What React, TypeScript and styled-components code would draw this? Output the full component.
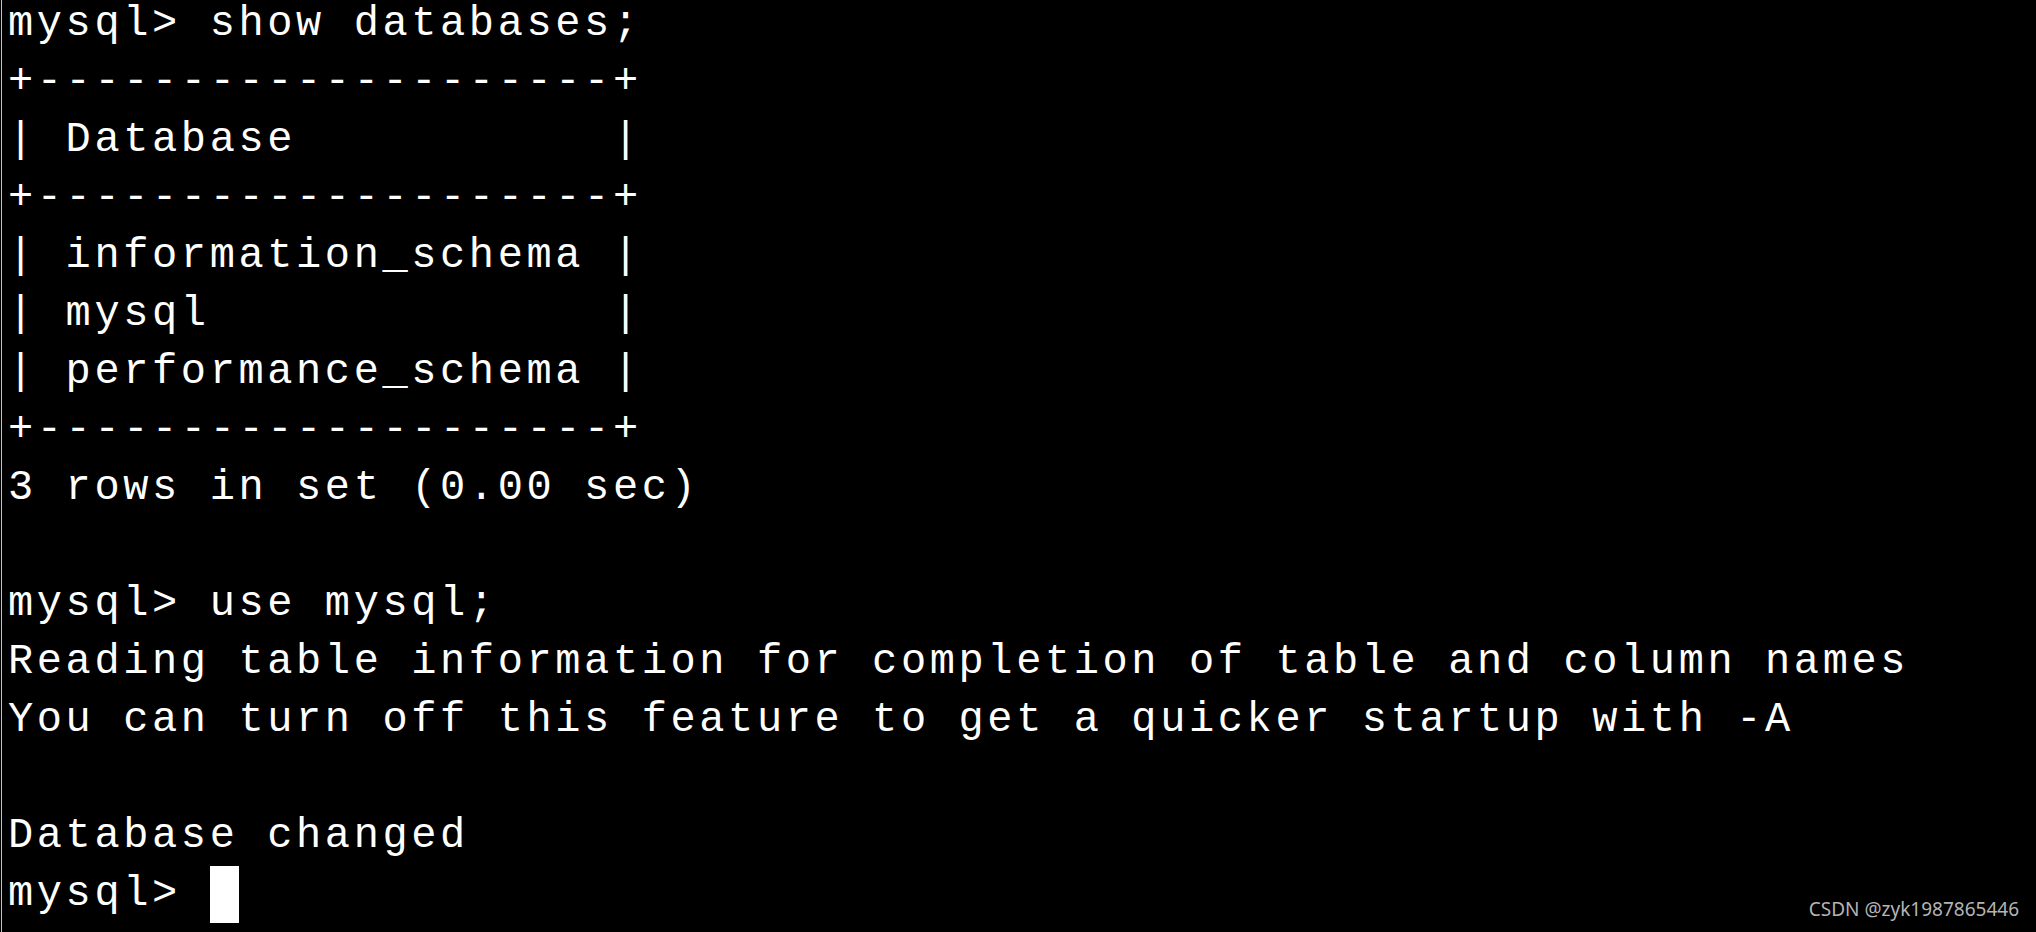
import React from "react";
import styled, { createGlobalStyle } from "styled-components";

const GlobalStyle = createGlobalStyle`
  html, body {
    margin: 0;
    padding: 0;
    background: #000000;
    overflow: hidden;
  }
  #root {
    width: 2036px;
    height: 932px;
  }
`;

const Screen = styled.div`
  position: relative;
  width: 2035px;
  height: 932px;
  box-sizing: border-box;
  margin-left: 1px;
  background: #000000;
  border-left: 1px solid #c4c4c4;
  padding-left: 6px;
  overflow: hidden;
`;

const Output = styled.div`
  display: flex;
  flex-direction: column;
  margin-top: -5px;
  font-family: "Liberation Mono", "Courier New", monospace;
  font-size: 42px;
  letter-spacing: 3.6px;
  line-height: 58px;
  color: #ffffff;
`;

const Line = styled.div`
  white-space: pre;
  height: 58px;
`;

const Cursor = styled.span`
  display: inline-block;
  width: 29px;
  height: 57px;
  background: #ffffff;
  vertical-align: -18px;
`;

const Watermark = styled.div`
  position: absolute;
  right: 17px;
  bottom: 13px;
  font-family: "Noto Sans", "Open Sans", sans-serif;
  font-size: 19px;
  line-height: 19px;
  color: #b4b4b4;
  white-space: nowrap;
`;

const lines: string[] = [
  "mysql> show databases;",
  "+--------------------+",
  "| Database           |",
  "+--------------------+",
  "| information_schema |",
  "| mysql              |",
  "| performance_schema |",
  "+--------------------+",
  "3 rows in set (0.00 sec)",
  "",
  "mysql> use mysql;",
  "Reading table information for completion of table and column names",
  "You can turn off this feature to get a quicker startup with -A",
  "",
  "Database changed",
];

export default function App() {
  return (
    <>
      <GlobalStyle />
      <Screen>
        <Output>
          {lines.map((text, i) => (
            <Line key={i}>{text}</Line>
          ))}
          <Line>
            {"mysql> "}
            <Cursor />
          </Line>
        </Output>
        <Watermark>CSDN @zyk1987865446</Watermark>
      </Screen>
    </>
  );
}
